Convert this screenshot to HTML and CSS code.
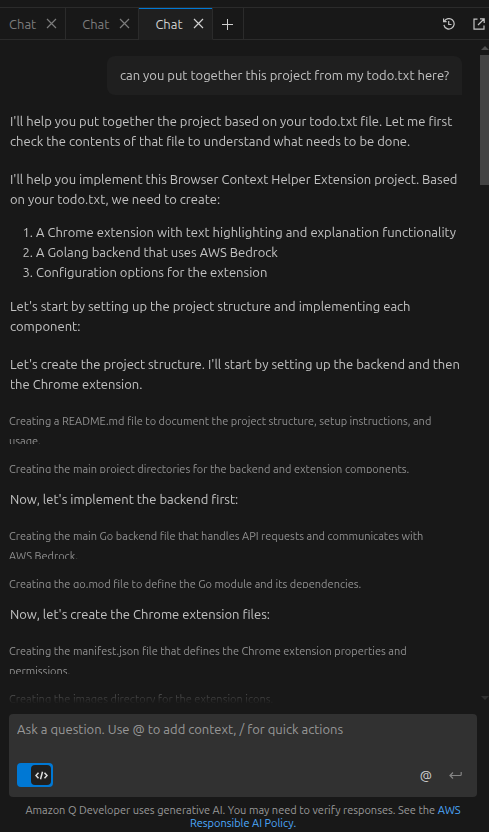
FILE: index.html
```html
<!DOCTYPE html>
<html lang="en">
<head>
<meta charset="utf-8">
<meta name="viewport" content="width=device-width, initial-scale=1">
<title>Amazon Q Chat</title>
<link rel="stylesheet" href="styles.css">
</head>
<body>
<div class="app">
  <header class="topbar">
    <nav class="tabs" aria-label="Chats">
      <div class="tab"><button class="tab-name">Chat</button><button class="icon-btn" aria-label="Close tab"><svg width="11" height="11" viewBox="0 0 11 11"><path d="M1 1l9 9M10 1l-9 9"/></svg></button></div>
      <div class="tab"><button class="tab-name">Chat</button><button class="icon-btn" aria-label="Close tab"><svg width="11" height="11" viewBox="0 0 11 11"><path d="M1 1l9 9M10 1l-9 9"/></svg></button></div>
      <div class="tab active"><button class="tab-name">Chat</button><button class="icon-btn" aria-label="Close tab"><svg width="11" height="11" viewBox="0 0 11 11"><path d="M1 1l9 9M10 1l-9 9"/></svg></button></div>
      <button class="new-tab icon-btn" aria-label="New tab"><svg width="11" height="11" viewBox="0 0 11 11"><path d="M5.500 0v11M0 5.500h11"/></svg></button>
    </nav>
    <div class="tools">
      <button class="icon-btn" aria-label="History"><svg width="12" height="12" viewBox="0 0 12 12"><path d="M1.300 3.500A5.200 5.200 0 1 1 .9 7M.6.6v3h3M5.700 3v3.500h2.800"/></svg></button>
      <button class="icon-btn" aria-label="Export"><svg width="12" height="12" viewBox="0 0 12 12"><path d="M4.500 1.200H1v10h10V7.500M7 .9h4.200V5M11 1L5 7"/></svg></button>
    </div>
  </header>

  <main class="chat">
    <div class="messages">
      <div class="bubble">can you put together this project from my todo.txt here?</div>
      <p class="first">I'll help you put together the project based on your todo.txt file. Let me first check the contents of that file to understand what needs to be done.</p>
      <p>I'll help you implement this Browser Context Helper Extension project. Based on your todo.txt, we need to create:</p>
      <ol>
        <li>A Chrome extension with text highlighting and explanation functionality</li>
        <li>A Golang backend that uses AWS Bedrock</li>
        <li>Configuration options for the extension</li>
      </ol>
      <p class="after-list">Let's start by setting up the project structure and implementing each component:</p>
      <p>Let's create the project structure. I'll start by setting up the backend and then the Chrome extension.</p>
      <div class="step two">Creating a README.md file to document the project structure, setup instructions, and usage.</div>
      <div class="step">Creating the main project directories for the backend and extension components.</div>
      <p class="heading">Now, let's implement the backend first:</p>
      <div class="step two">Creating the main Go backend file that handles API requests and communicates with AWS Bedrock.</div>
      <div class="step">Creating the go.mod file to define the Go module and its dependencies.</div>
      <p class="heading">Now, let's create the Chrome extension files:</p>
      <div class="step two">Creating the manifest.json file that defines the Chrome extension properties and permissions.</div>
      <div class="step">Creating the images directory for the extension icons.</div>
    </div>
    <div class="scrollbar" aria-hidden="true"><i class="up"></i><i class="thumb"></i><i class="down"></i></div>
  </main>

  <footer class="bottom">
    <form class="composer">
      <textarea rows="1" aria-label="Prompt" placeholder="Ask a question. Use @ to add context, / for quick actions"></textarea>
      <div class="actions">
        <label class="switch"><input type="checkbox" checked aria-label="Agentic coding"><span class="knob"><svg width="13" height="9" viewBox="0 0 13 9"><path d="M3.500 1.800L1 4.500l2.500 2.700M9.500 1.800L12 4.500 9.500 7.200M7.500.8l-2 7.400"/></svg></span></label>
        <span class="right">
          <button type="button" class="at" aria-label="Add context">@</button>
          <button type="submit" class="send icon-btn" aria-label="Send"><svg width="13" height="9" viewBox="0 0 13 9"><path d="M12.200 1v2.500q0 1-1 1H1M4 1.500l-3 3 3 3"/></svg></button>
        </span>
      </div>
    </form>
    <p class="notice">Amazon Q Developer uses generative AI. You may need to verify responses. See the <a href="#policy">AWS Responsible AI Policy.</a></p>
  </footer>
</div>
</body>
</html>
```
FILE: styles.css
```css
* { box-sizing: border-box; }
body {
  margin: 0;
  background: #181818;
  color: #c2c2c2;
  font: 13px/20px Ubuntu, "Noto Sans", sans-serif;
}
button {
  padding: 0;
  border: 0;
  background: none;
  color: inherit;
  font: inherit;
}
svg { display: block; fill: none; stroke: currentColor; stroke-width: 1.200; }
.icon-btn { display: flex; align-items: center; justify-content: center; }
.app { display: flex; flex-direction: column; height: 100vh; }

.topbar {
  display: flex;
  justify-content: space-between;
  height: 33px;
  margin-top: 7px;
  border-top: 1px solid #2b2b2b;
  border-bottom: 1px solid #2b2b2b;
}
.tabs { display: flex; margin-bottom: -1px; }
.tab {
  display: flex;
  align-items: center;
  gap: 10px;
  padding: 0 8px 0 16px;
  border-right: 1px solid #2b2b2b;
  border-bottom: 1px solid #2b2b2b;
  color: #7c7c7c;
}
.tab:first-child { padding-left: 9px; }
.tab.active {
  border-bottom-color: #1f1f1f;
  background: #1f1f1f;
  color: #d0d0d0;
  box-shadow: inset 0 1px #0078d4;
}
.new-tab { width: 31px; border-right: 1px solid #2b2b2b; color: #cfcfcf; }
.new-tab svg { stroke-width: 1; }
.tools { display: flex; gap: 18px; padding-right: 4px; color: #c4c4c4; }

.chat { display: flex; flex: 1; min-height: 0; }
.messages {
  display: flow-root;
  flex: 1;
  overflow: hidden;
  padding: 16px 18px 0 10px;
  mask-image: linear-gradient(#000 calc(100% - 20px), transparent);
}
.bubble {
  width: fit-content;
  margin: 0 0 16px auto;
  padding: 9px 13px 10px;
  border-radius: 8px 8px 0 8px;
  background: #1f1f1f;
}
.messages p { margin: 18px 0 0; }
.messages .first { margin-top: 0; }
ol { margin: 13px 0 14px; padding-left: 26px; }
.messages .after-list { margin-top: 0; }
.step {
  height: 14px;
  margin: 15px 0 0 -1px;
  padding-right: 20px;
  overflow: hidden;
  color: #909090;
  font-size: 11px;
}
.step.two { height: 33px; margin-top: 17px; }
.messages .heading { margin-top: 16px; }

.scrollbar { display: flex; flex-direction: column; align-items: center; width: 9px; }
.up, .down { border: 4px solid transparent; }
.up { margin: 2px 0 5px; border-bottom-color: #4f4f4f; }
.down { margin: auto 0 0; border-top-color: #303030; }
.thumb { width: 9px; height: 130px; background: #434343; }

.bottom { padding: 10px 12px 2px 9px; }
.composer {
  display: flex;
  flex-direction: column;
  justify-content: space-between;
  height: 83px;
  padding: 5px 8px 10px;
  border-radius: 4px;
  background: #313131;
}
textarea {
  display: block;
  width: 100%;
  padding: 0;
  border: 0;
  outline: 0;
  resize: none;
  overflow: hidden;
  background: none;
  color: #cccccc;
  font: inherit;
}
textarea::placeholder { color: #989898; opacity: 1; }
.actions, .right { display: flex; align-items: center; }
.actions { justify-content: space-between; }
.right { gap: 17px; padding-right: 7px; }
.switch {
  display: flex;
  justify-content: flex-end;
  width: 36px;
  height: 24px;
  padding: 2px;
  border-radius: 4px;
  background: #0078d4;
}
.switch input { position: absolute; opacity: 0; margin: 0; }
.knob {
  display: grid;
  place-items: center;
  width: 20px;
  height: 20px;
  border-radius: 4px;
  background: #1f1f1f;
  color: #dddddd;
}
.knob svg { stroke-width: 1.500; }
.at { color: #cccccc; }
.send { color: #858585; }
.notice {
  margin: 7px 16px 0;
  color: #989898;
  font-size: 11px;
  line-height: 13px;
  text-align: center;
}
.notice a { color: #4daafc; text-decoration: none; }
```
